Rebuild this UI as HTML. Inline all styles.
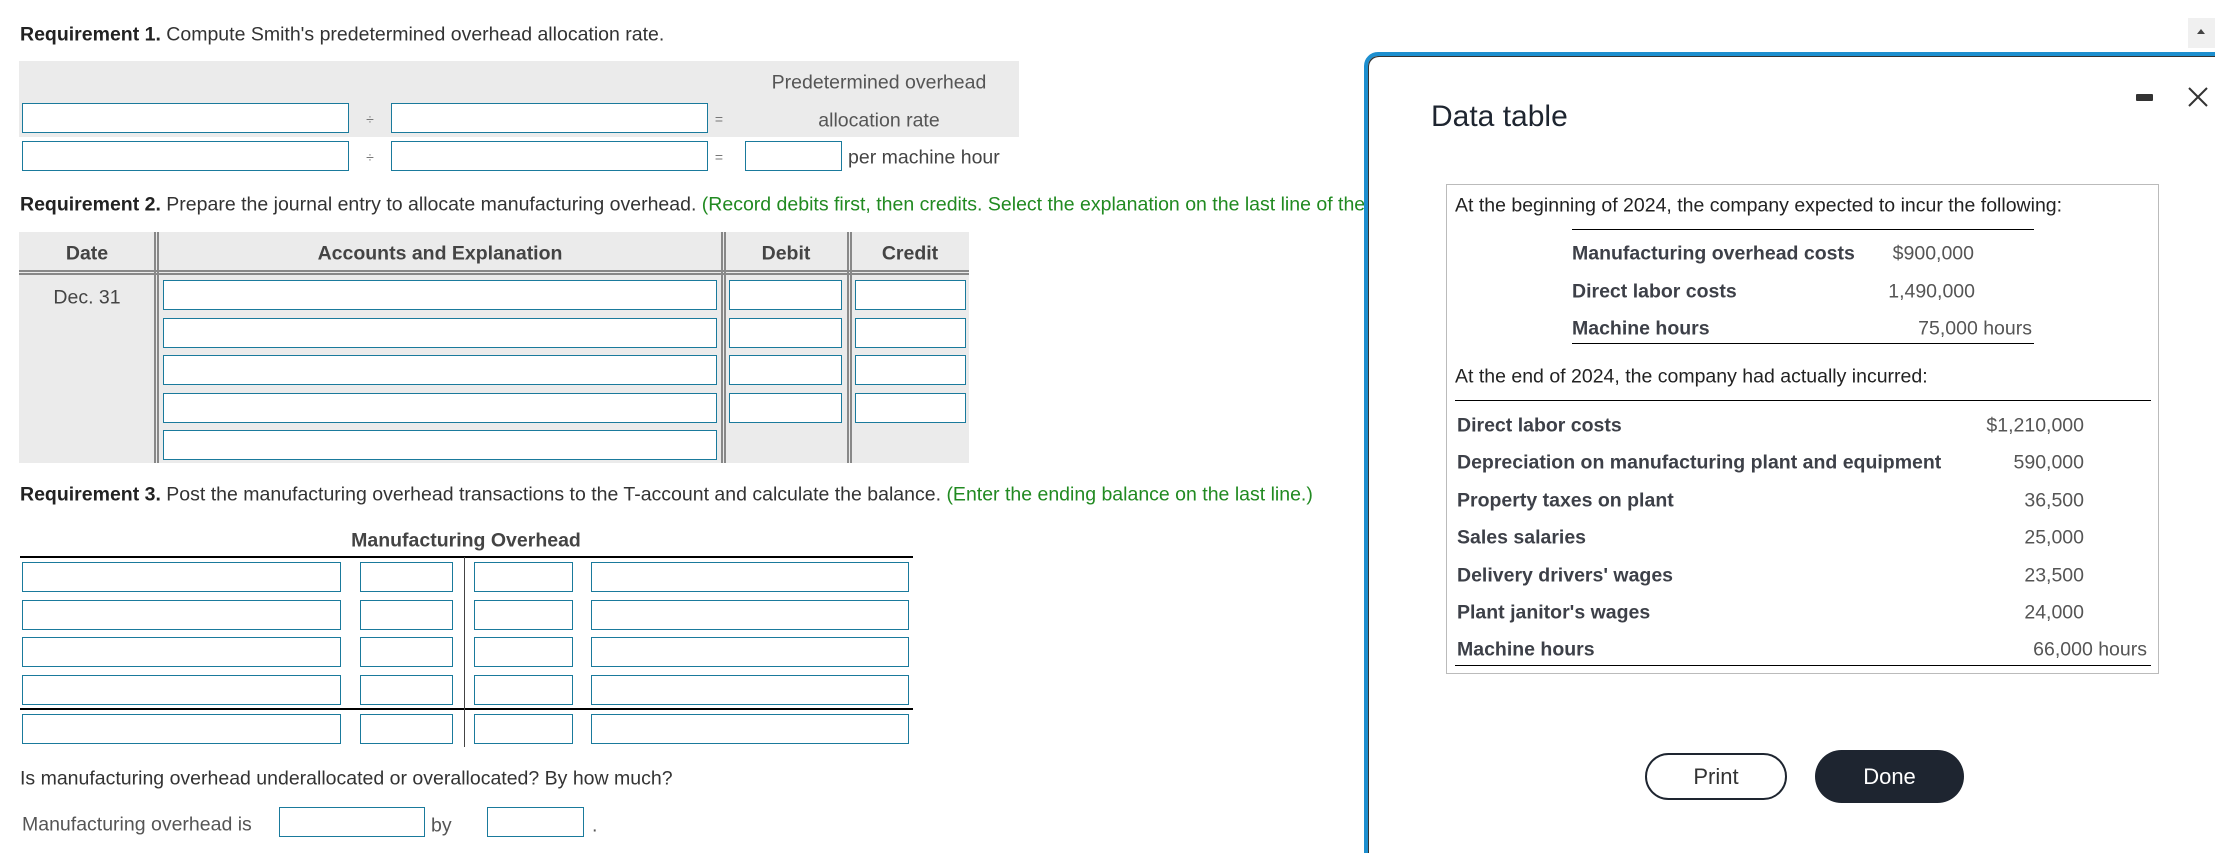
<!DOCTYPE html>
<html style="width:2215px;height:853px;overflow:hidden"><head><meta charset="utf-8"><style>
*{margin:0;padding:0;box-sizing:border-box}
body{width:2215px;height:853px;overflow:hidden;background:#fff;font-family:"Liberation Sans",Arial,sans-serif;color:#333;position:relative;font-size:19.5px}
.a{position:absolute;white-space:nowrap}
.in{position:absolute;border:1.5px solid #1a7a9c;background:#fff}
.g{position:absolute;background:#ebebeb}
.c{transform:translate(-50%,-50%)}
.m{transform:translateY(-50%)}
.grn{color:#218a21}
b{font-weight:bold;color:#222}
.vl{position:absolute;width:1px;background:#888}
.hl{position:absolute;height:1px;background:#000}
.lab{position:absolute;font-weight:bold;color:#3d4048;transform:translateY(-50%);white-space:nowrap}
.val{position:absolute;color:#555;transform:translateY(-50%);white-space:nowrap;text-align:right}
</style></head><body>
<div class="a m" style="left:20px;top:35px"><b>Requirement 1.</b> Compute Smith's predetermined overhead allocation rate.</div>
<div class="g" style="left:19px;top:61px;width:1000px;height:76px"></div>
<div class="a c" style="left:879px;top:83px;color:#555">Predetermined overhead</div>
<div class="a c" style="left:879px;top:121px;color:#555">allocation rate</div>
<div class="in" style="left:22px;top:103px;width:327px;height:30px"></div>
<div class="a c" style="left:370px;top:119px;font-size:14px;color:#777">÷</div>
<div class="in" style="left:391px;top:103px;width:317px;height:30px"></div>
<div class="a c" style="left:719px;top:119px;font-size:14px;color:#777">=</div>
<div class="in" style="left:22px;top:141px;width:327px;height:30px"></div>
<div class="a c" style="left:370px;top:157px;font-size:14px;color:#777">÷</div>
<div class="in" style="left:391px;top:141px;width:317px;height:30px"></div>
<div class="a c" style="left:719px;top:157px;font-size:14px;color:#777">=</div>
<div class="in" style="left:745px;top:141px;width:97px;height:30px"></div>
<div class="a m" style="left:848px;top:158px;color:#444">per machine hour</div>

<div class="a m" style="left:20px;top:205px"><b>Requirement 2.</b> Prepare the journal entry to allocate manufacturing overhead. <span class="grn">(Record debits first, then credits. Select the explanation on the last line of the journal entry.)</span></div>
<div class="g" style="left:19px;top:232px;width:950px;height:231px"></div>
<div style="position:absolute;left:19px;top:270px;width:950px;height:5px;border-top:2px solid #888;border-bottom:2px solid #888"></div>
<div style="position:absolute;left:154px;top:232px;width:5px;height:231px;border-left:2px solid #888;border-right:2px solid #888"></div>
<div style="position:absolute;left:721px;top:232px;width:5px;height:231px;border-left:2px solid #888;border-right:2px solid #888"></div>
<div style="position:absolute;left:847px;top:232px;width:5px;height:231px;border-left:2px solid #888;border-right:2px solid #888"></div>
<div class="a c" style="left:87px;top:254px;font-weight:bold;color:#444">Date</div>
<div class="a c" style="left:440px;top:254px;font-weight:bold;color:#444">Accounts and Explanation</div>
<div class="a c" style="left:786px;top:254px;font-weight:bold;color:#444">Debit</div>
<div class="a c" style="left:910px;top:254px;font-weight:bold;color:#444">Credit</div>
<div class="a c" style="left:87px;top:298px;color:#444">Dec. 31</div>
<div class="in" style="left:163px;top:280px;width:554px;height:30px"></div>
<div class="in" style="left:729px;top:280px;width:113px;height:30px"></div>
<div class="in" style="left:855px;top:280px;width:111px;height:30px"></div>
<div class="in" style="left:163px;top:318px;width:554px;height:30px"></div>
<div class="in" style="left:729px;top:318px;width:113px;height:30px"></div>
<div class="in" style="left:855px;top:318px;width:111px;height:30px"></div>
<div class="in" style="left:163px;top:355px;width:554px;height:30px"></div>
<div class="in" style="left:729px;top:355px;width:113px;height:30px"></div>
<div class="in" style="left:855px;top:355px;width:111px;height:30px"></div>
<div class="in" style="left:163px;top:393px;width:554px;height:30px"></div>
<div class="in" style="left:729px;top:393px;width:113px;height:30px"></div>
<div class="in" style="left:855px;top:393px;width:111px;height:30px"></div>
<div class="in" style="left:163px;top:430px;width:554px;height:30px"></div>

<div class="a m" style="left:20px;top:495px"><b>Requirement 3.</b> Post the manufacturing overhead transactions to the T-account and calculate the balance. <span class="grn">(Enter the ending balance on the last line.)</span></div>
<div class="a c" style="left:466px;top:541px;font-weight:bold;color:#444">Manufacturing Overhead</div>
<div class="hl" style="left:20px;top:556px;width:893px;height:2px"></div>
<div class="hl" style="left:20px;top:708px;width:893px;height:2px"></div>
<div class="vl" style="left:464px;top:557px;height:190px;background:#444"></div>
<div class="in" style="left:22px;top:562px;width:319px;height:30px"></div><div class="in" style="left:360px;top:562px;width:93px;height:30px"></div><div class="in" style="left:474px;top:562px;width:99px;height:30px"></div><div class="in" style="left:591px;top:562px;width:318px;height:30px"></div>
<div class="in" style="left:22px;top:600px;width:319px;height:30px"></div><div class="in" style="left:360px;top:600px;width:93px;height:30px"></div><div class="in" style="left:474px;top:600px;width:99px;height:30px"></div><div class="in" style="left:591px;top:600px;width:318px;height:30px"></div>
<div class="in" style="left:22px;top:637px;width:319px;height:30px"></div><div class="in" style="left:360px;top:637px;width:93px;height:30px"></div><div class="in" style="left:474px;top:637px;width:99px;height:30px"></div><div class="in" style="left:591px;top:637px;width:318px;height:30px"></div>
<div class="in" style="left:22px;top:675px;width:319px;height:30px"></div><div class="in" style="left:360px;top:675px;width:93px;height:30px"></div><div class="in" style="left:474px;top:675px;width:99px;height:30px"></div><div class="in" style="left:591px;top:675px;width:318px;height:30px"></div>
<div class="in" style="left:22px;top:714px;width:319px;height:30px"></div><div class="in" style="left:360px;top:714px;width:93px;height:30px"></div><div class="in" style="left:474px;top:714px;width:99px;height:30px"></div><div class="in" style="left:591px;top:714px;width:318px;height:30px"></div>
<div class="a m" style="left:20px;top:779px">Is manufacturing overhead underallocated or overallocated? By how much?</div>
<div class="a m" style="left:22px;top:825px;color:#555">Manufacturing overhead is</div>
<div class="in" style="left:279px;top:807px;width:146px;height:30px"></div>
<div class="a m" style="left:431px;top:826px;color:#555">by</div>
<div class="in" style="left:487px;top:807px;width:97px;height:30px"></div>
<div class="a m" style="left:592px;top:826px;color:#555">.</div>

<div style="position:absolute;left:2188px;top:18px;width:27px;height:30px;background:#f0f0f0"></div>
<div style="position:absolute;left:2197px;top:29px;width:0;height:0;border-left:4px solid transparent;border-right:4px solid transparent;border-bottom:5px solid #444"></div>

<div style="position:absolute;left:1364px;top:52px;width:900px;height:830px;background:#fff;border:4px solid #1d8fcf;border-radius:14px;box-shadow:inset 1px 1px 0 #333"></div>
<div class="a m" style="left:1431px;top:117px;font-size:30px;color:#1e2530">Data table</div>
<div style="position:absolute;left:2136px;top:94px;width:17px;height:7px;background:#333;border-radius:1px"></div>
<svg style="position:absolute;left:2187px;top:86px" width="22" height="22" viewBox="0 0 22 22"><path d="M2 2L20 20M20 2L2 20" stroke="#333" stroke-width="2" fill="none"/></svg>
<div style="position:absolute;left:1446px;top:184px;width:713px;height:490px;border:1.5px solid #bbb"></div>
<div class="a m" style="left:1455px;top:206px;color:#222">At the beginning of 2024, the company expected to incur the following:</div>
<div class="hl" style="left:1572px;top:229px;width:462px"></div>
<div class="lab" style="left:1572px;top:254px">Manufacturing overhead costs</div><div class="val" style="right:241px;top:254px">$900,000</div>
<div class="lab" style="left:1572px;top:292px">Direct labor costs</div><div class="val" style="right:240px;top:292px">1,490,000</div>
<div class="lab" style="left:1572px;top:329px">Machine hours</div><div class="val" style="right:183px;top:329px">75,000 hours</div>
<div class="hl" style="left:1572px;top:343px;width:462px"></div>
<div class="a m" style="left:1455px;top:377px;color:#222">At the end of 2024, the company had actually incurred:</div>
<div class="hl" style="left:1455px;top:400px;width:696px"></div>
<div class="lab" style="left:1457px;top:426px">Direct labor costs</div><div class="val" style="right:131px;top:426px">$1,210,000</div>
<div class="lab" style="left:1457px;top:463px">Depreciation on manufacturing plant and equipment</div><div class="val" style="right:131px;top:463px">590,000</div>
<div class="lab" style="left:1457px;top:501px">Property taxes on plant</div><div class="val" style="right:131px;top:501px">36,500</div>
<div class="lab" style="left:1457px;top:538px">Sales salaries</div><div class="val" style="right:131px;top:538px">25,000</div>
<div class="lab" style="left:1457px;top:576px">Delivery drivers' wages</div><div class="val" style="right:131px;top:576px">23,500</div>
<div class="lab" style="left:1457px;top:613px">Plant janitor's wages</div><div class="val" style="right:131px;top:613px">24,000</div>
<div class="lab" style="left:1457px;top:650px">Machine hours</div><div class="val" style="right:68px;top:650px">66,000 hours</div>
<div class="hl" style="left:1455px;top:665px;width:696px"></div>
<div style="position:absolute;left:1645px;top:753px;width:142px;height:47px;border:2px solid #1e2530;border-radius:24px;display:flex;align-items:center;justify-content:center;font-size:22px;color:#333">Print</div>
<div style="position:absolute;left:1815px;top:750px;width:149px;height:53px;background:#1e2530;border-radius:27px;display:flex;align-items:center;justify-content:center;font-size:22px;color:#fff">Done</div>
</body></html>
